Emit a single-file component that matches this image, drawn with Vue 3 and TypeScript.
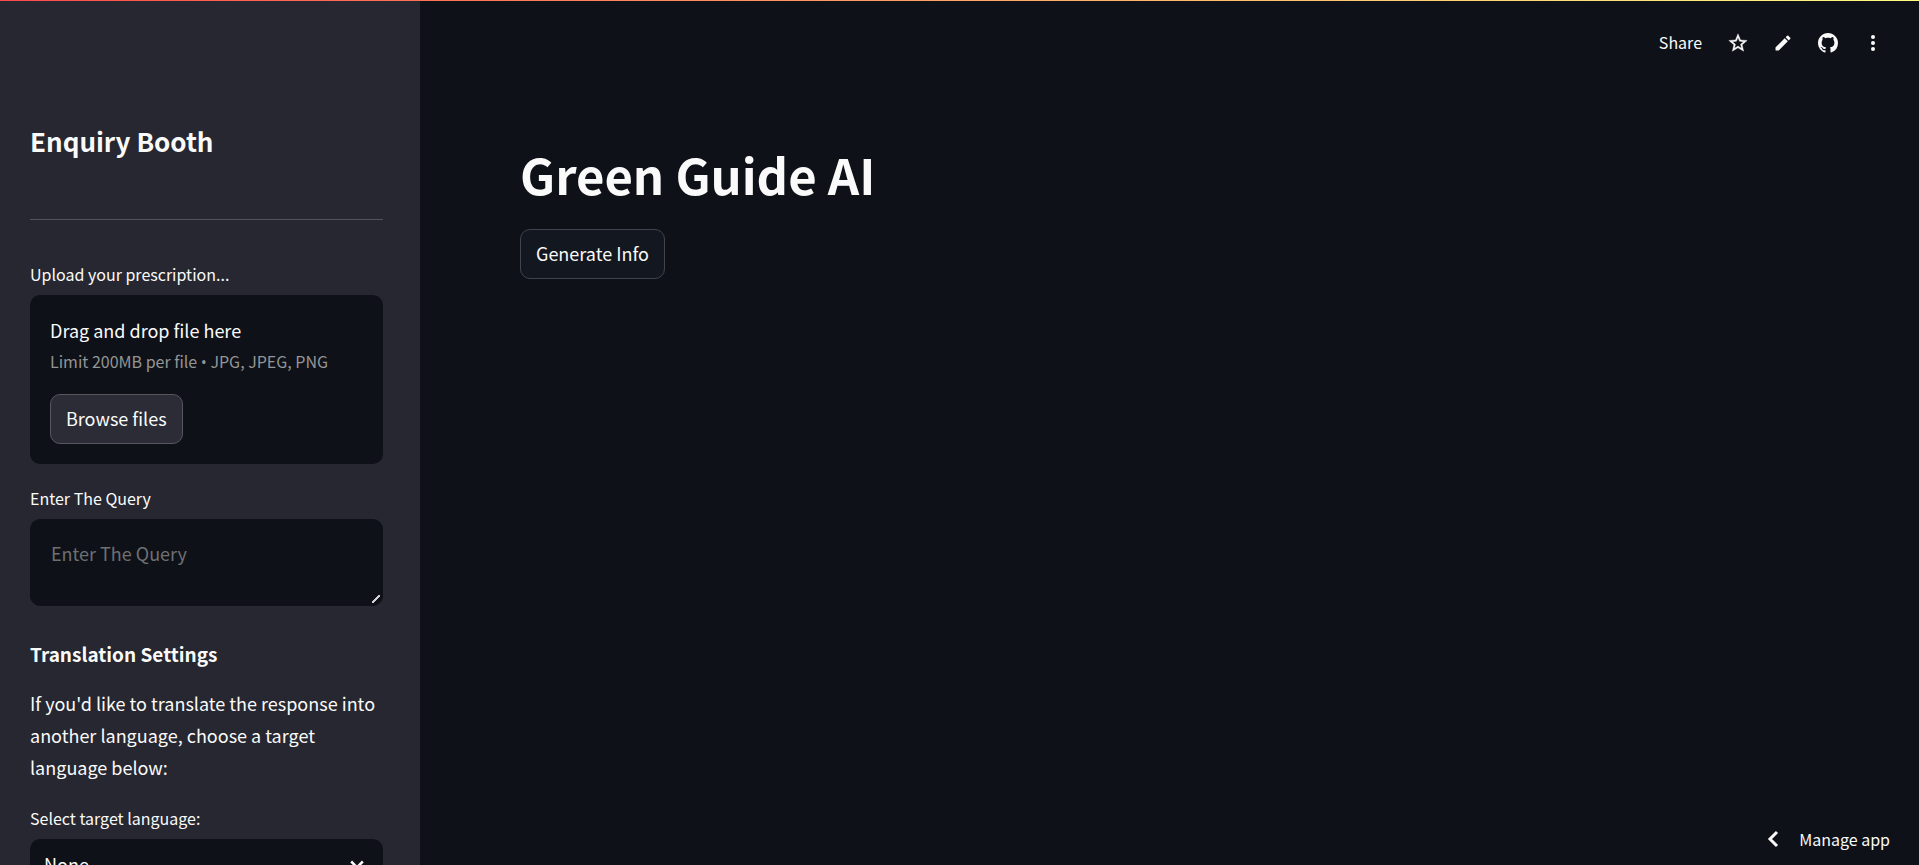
<script setup lang="ts">
import { ref } from 'vue'

const query = ref<string>('')
const language = ref<string>('None')
const languages: string[] = ['None', 'English', 'Hindi', 'Spanish', 'French', 'German']
</script>

<template>
  <div class="app">
    <div class="decoration"></div>

    <aside class="sidebar">
      <h2 class="sidebar-title">Enquiry Booth</h2>
      <hr class="divider" />

      <section class="field">
        <span id="upload-label" class="label">Upload your prescription...</span>
        <div class="dropzone" role="group" aria-labelledby="upload-label">
          <span class="drop-title">Drag and drop file here</span>
          <small class="drop-limit">Limit 200MB per file <span class="bullet">•</span> JPG, JPEG, PNG</small>
          <button type="button" class="btn btn-browse">Browse files</button>
        </div>
      </section>

      <section class="field">
        <label class="label" for="query">Enter The Query</label>
        <textarea id="query" v-model="query" class="query" placeholder="Enter The Query"></textarea>
      </section>

      <h3 class="section-title">Translation Settings</h3>
      <p class="text">
        If you'd like to translate the response into another language, choose a target language below:
      </p>

      <section class="field">
        <label class="label" for="language">Select target language:</label>
        <div class="select-wrap">
          <select id="language" v-model="language" class="select">
            <option v-for="item in languages" :key="item" :value="item">{{ item }}</option>
          </select>
          <svg class="select-arrow" viewBox="0 0 24 24" width="20" height="20" aria-hidden="true">
            <path d="M5 9l7 7 7-7" fill="none" stroke="currentColor" stroke-width="3" />
          </svg>
        </div>
      </section>
    </aside>

    <div class="page">
      <header class="toolbar">
        <button type="button" class="tool tool-share">Share</button>
        <button type="button" class="tool" aria-label="Favorite">
          <svg viewBox="0 0 24 24" width="22" height="22" aria-hidden="true">
            <path
              fill="currentColor"
              stroke="currentColor"
              stroke-width="0.4"
              d="M22 9.24l-7.19-.62L12 2 9.19 8.63 2 9.24l5.46 4.73L5.82 21 12 17.27 18.18 21l-1.63-7.03L22 9.24zM12 15.4l-3.76 2.27 1-4.28-3.32-2.88 4.38-.38L12 6.1l1.71 4.04 4.38.38-3.32 2.88 1 4.28L12 15.4z"
            />
          </svg>
        </button>
        <button type="button" class="tool" aria-label="Edit">
          <svg viewBox="0 0 24 24" width="20" height="20" aria-hidden="true">
            <path
              fill="currentColor"
              d="M3 17.46v3.04c0 .28.22.5.5.5h3.04c.13 0 .26-.05.35-.15L17.81 9.94l-3.75-3.75L3.15 17.1c-.1.1-.15.22-.15.36zM20.71 7.04a1 1 0 0 0 0-1.41l-2.34-2.34a1 1 0 0 0-1.41 0l-1.83 1.83 3.75 3.75 1.83-1.83z"
            />
          </svg>
        </button>
        <button type="button" class="tool" aria-label="View source on GitHub">
          <svg viewBox="0 0 16 16" width="20" height="20" aria-hidden="true">
            <path
              fill="currentColor"
              d="M8 0C3.58 0 0 3.58 0 8c0 3.54 2.29 6.53 5.47 7.59.4.07.55-.17.55-.38 0-.19-.01-.82-.01-1.49-2.01.37-2.53-.49-2.69-.94-.09-.23-.48-.94-.82-1.13-.28-.15-.68-.52-.01-.53.63-.01 1.08.58 1.23.82.72 1.21 1.87.87 2.33.66.07-.52.28-.87.51-1.07-1.78-.2-3.64-.89-3.64-3.95 0-.87.31-1.59.82-2.15-.08-.2-.36-1.02.08-2.12 0 0 .67-.21 2.2.82.64-.18 1.32-.27 2-.27s1.36.09 2 .27c1.53-1.04 2.2-.82 2.2-.82.44 1.1.16 1.92.08 2.12.51.56.82 1.27.82 2.15 0 3.07-1.87 3.75-3.65 3.95.29.25.54.73.54 1.48 0 1.07-.01 1.93-.01 2.2 0 .21.15.46.55.38A8.01 8.01 0 0 0 16 8c0-4.42-3.58-8-8-8z"
            />
          </svg>
        </button>
        <button type="button" class="tool" aria-label="Main menu">
          <svg viewBox="0 0 24 24" width="24" height="24" aria-hidden="true">
            <g fill="currentColor">
              <circle cx="12" cy="6" r="2" />
              <circle cx="12" cy="12" r="2" />
              <circle cx="12" cy="18" r="2" />
            </g>
          </svg>
        </button>
      </header>

      <main class="content">
        <h1 class="title">Green Guide AI</h1>
        <button type="button" class="btn">Generate Info</button>
      </main>

      <footer class="footer">
        <button type="button" class="manage">
          <svg viewBox="0 0 24 24" width="24" height="24" aria-hidden="true">
            <path d="M16 5l-7 7 7 7" fill="none" stroke="currentColor" stroke-width="3" />
          </svg>
          <span>Manage app</span>
        </button>
      </footer>
    </div>
  </div>
</template>

<style>
body {
  background: #0e1117;
}
</style>

<style scoped>
.app {
  position: relative;
  display: flex;
  height: 100vh;
  overflow: hidden;
  background: #0e1117;
  color: #fafafa;
  color-scheme: dark;
  font-family: "Source Sans Pro", "Noto Sans CJK SC", sans-serif;
  font-size: 18px;
  line-height: 32px;
}

.app *,
.app *::before {
  box-sizing: border-box;
}

.decoration {
  position: absolute;
  top: 0;
  left: 0;
  right: 0;
  height: 1px;
  z-index: 2;
  background: linear-gradient(90deg, #ff4b4b, #fffd80);
}

button,
textarea,
select {
  font: inherit;
  color: inherit;
}

button {
  cursor: pointer;
}

.sidebar {
  flex: 0 0 420px;
  padding: 123px 37px 40px 30px;
  overflow-y: auto;
  scrollbar-width: none;
  background: #262730;
}

.sidebar-title {
  margin: 0;
  font-size: 26px;
  line-height: 36px;
  font-weight: 600;
}

.divider {
  height: 1px;
  margin: 60px 0 41px;
  border: 0;
  background: #51525a;
}

.field {
  display: flex;
  flex-direction: column;
  gap: 7px;
  margin-bottom: 21px;
}

.label {
  font-size: 16px;
  line-height: 27px;
}

.dropzone {
  display: flex;
  flex-direction: column;
  align-items: flex-start;
  padding: 20px;
  border-radius: 10px;
  background: #0e1117;
}

.drop-title {
  line-height: 30px;
}

.drop-limit {
  margin-bottom: 17px;
  font-size: 16px;
  color: #949595;
}

.bullet {
  font-family: "Open Sans", sans-serif;
  line-height: 1;
}

.btn {
  height: 50px;
  padding: 0 15px 2px;
  border: 1px solid #41444c;
  border-radius: 10px;
  background: #131720;
}

.btn-browse {
  border-color: #55565e;
  background: #2b2c36;
}

.query {
  display: block;
  width: 100%;
  height: 87px;
  padding: 17px 20px;
  border: 1px solid #0e1117;
  border-radius: 10px;
  outline: none;
  resize: vertical;
  background: #0e1117;
}

.query::placeholder {
  color: #6e7073;
  opacity: 1;
}

.query::-webkit-resizer {
  background: linear-gradient(135deg, transparent 42%, #d0d0d2 42%, #d0d0d2 60%, transparent 60%) 5px 5px / 8px 8px no-repeat;
}

.section-title {
  margin: 34px 0 19px;
  font-size: 19px;
  line-height: 28px;
  font-weight: 600;
}

.text {
  margin: 0 0 22px;
}

.select-wrap {
  position: relative;
}

.select {
  display: block;
  width: 100%;
  height: 50px;
  padding: 0 44px 0 14px;
  border: 0;
  border-radius: 10px;
  appearance: none;
  background: #0e1117;
}

.select-arrow {
  position: absolute;
  top: 15px;
  right: 16px;
  pointer-events: none;
}

.page {
  flex: 1;
  display: flex;
  flex-direction: column;
  min-width: 0;
}

.toolbar {
  display: flex;
  justify-content: flex-end;
  align-items: center;
  gap: 5px;
  padding: 23px 26px 0 0;
}

.tool {
  display: flex;
  align-items: center;
  justify-content: center;
  width: 40px;
  height: 40px;
  padding: 0;
  border: 0;
  background: none;
}

.tool-share {
  width: auto;
  padding: 0 11px 2px;
  font-size: 16px;
}

.content {
  flex: 1;
  padding: 78px 100px;
}

.title {
  margin: 0 0 22px;
  font-size: 49px;
  line-height: 66px;
  font-weight: 700;
}

.footer {
  display: flex;
  justify-content: flex-end;
  padding: 0 29px 10px 0;
}

.manage {
  display: flex;
  align-items: center;
  gap: 14px;
  padding: 0;
  border: 0;
  background: none;
  font-size: 16px;
}
</style>
